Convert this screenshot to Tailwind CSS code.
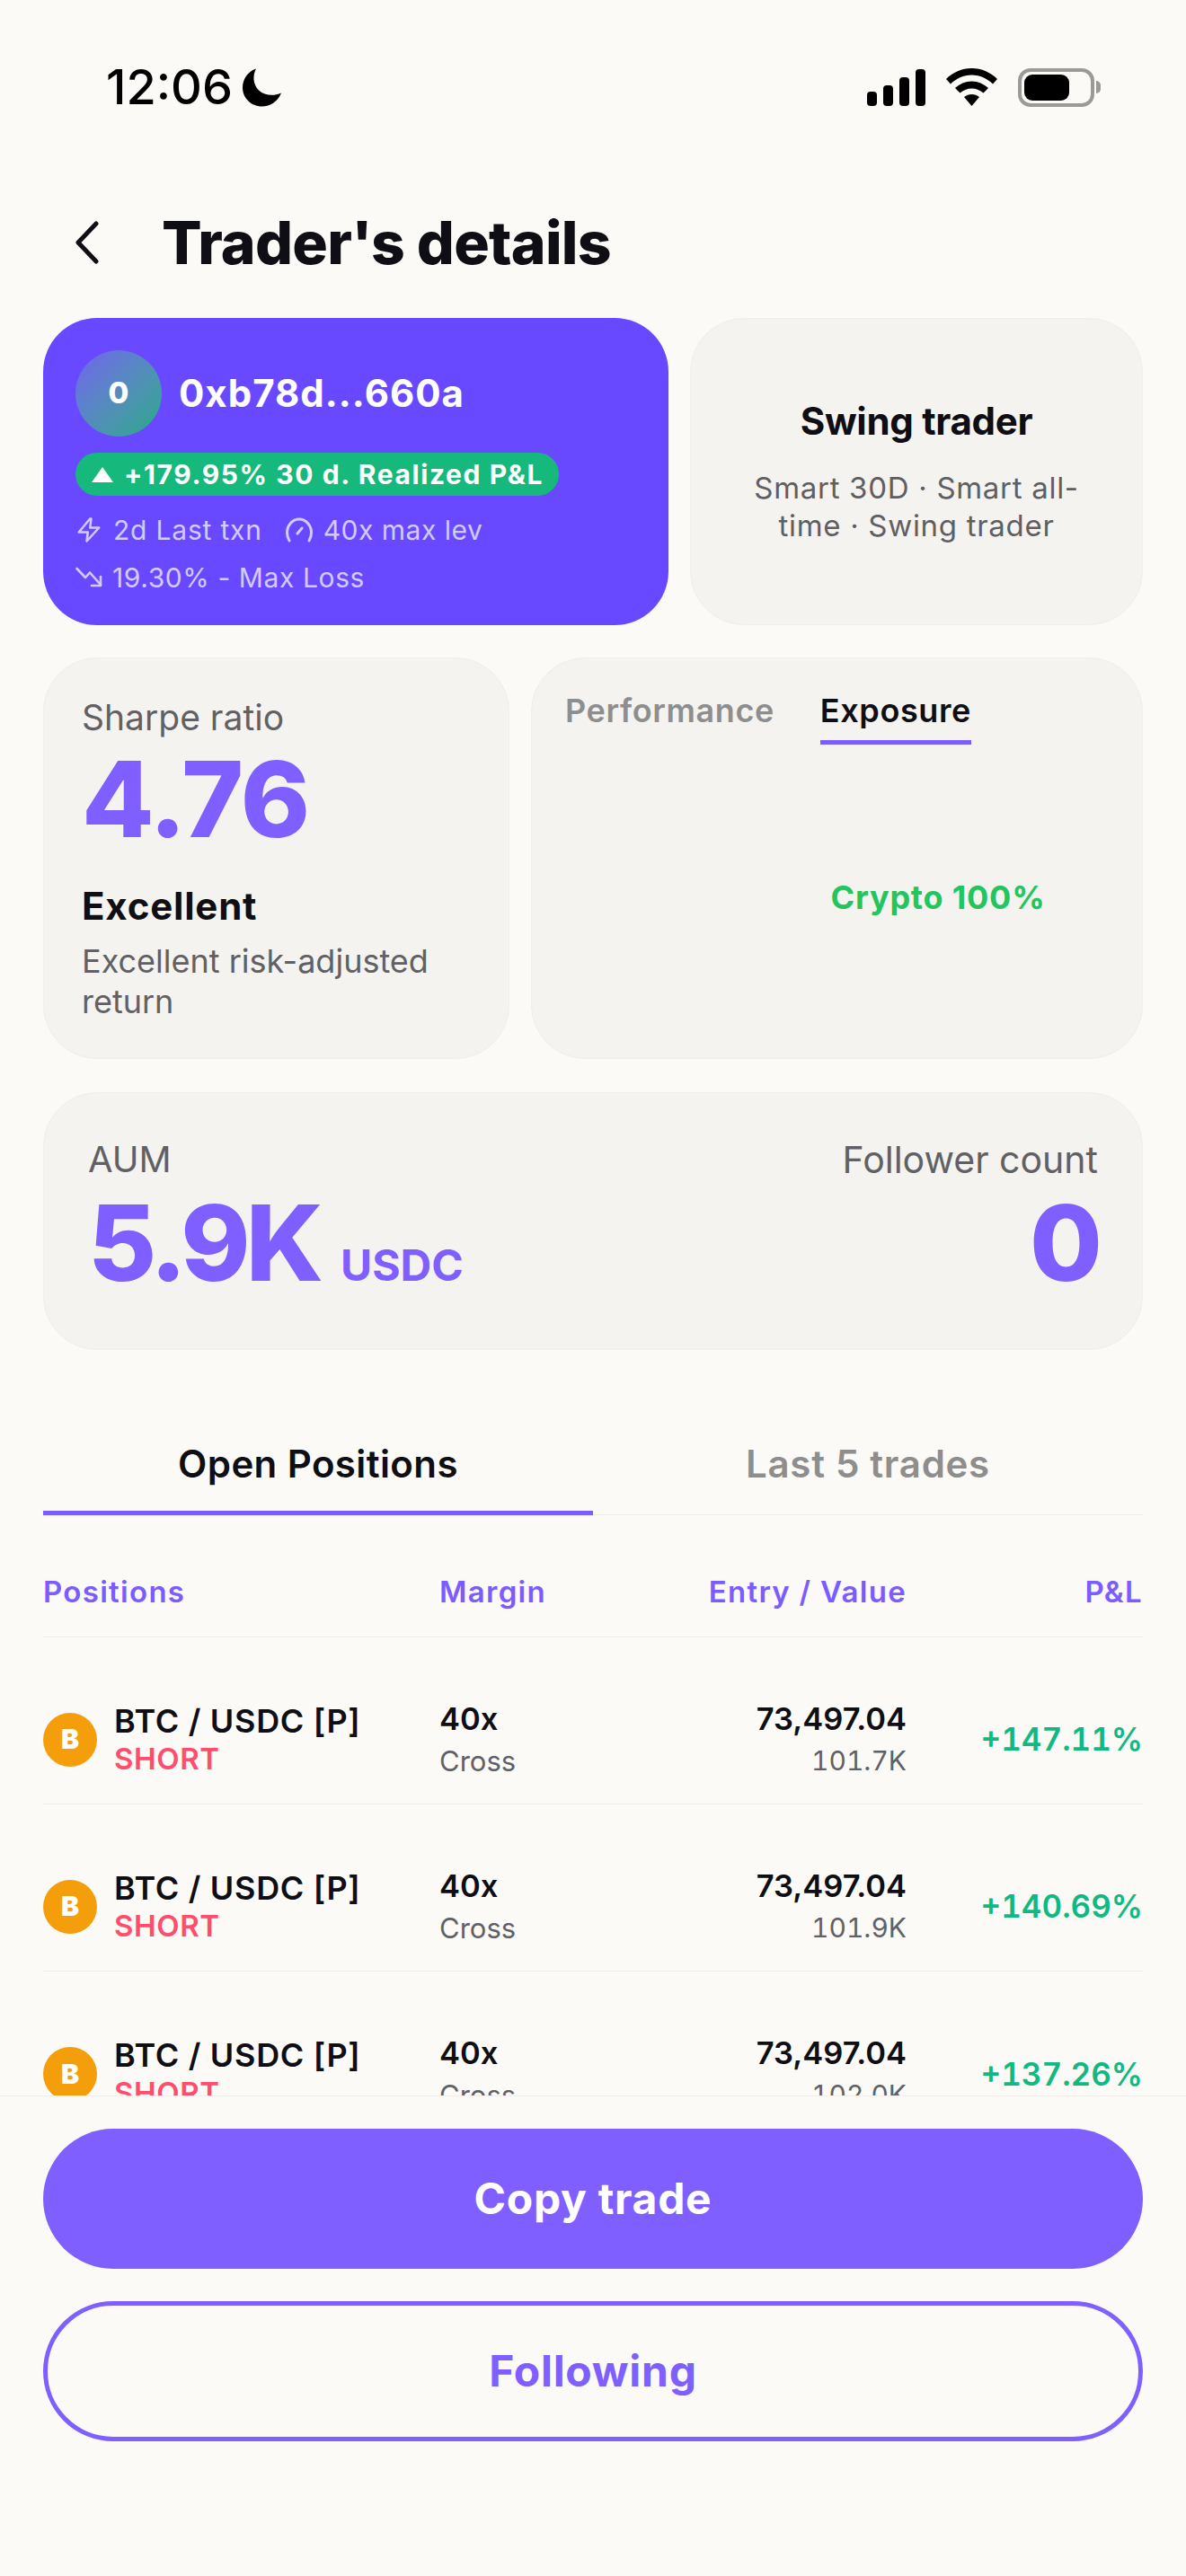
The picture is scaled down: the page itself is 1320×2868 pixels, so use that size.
<!doctype html>
<html><head><meta charset="utf-8"><script src="https://cdn.jsdelivr.net/npm/@tailwindcss/browser@4"></script></head>
<body class="m-0">
<div class="w-[1320px] h-[2868px] flex flex-col overflow-hidden bg-[#FBFAF6] font-[Inter,sans-serif] text-[#0E0E14]">
  <div class="h-[194px] shrink-0 flex items-center justify-between pl-[118px] pr-[95px] text-black">
    <div class="flex items-center gap-[10px]">
      <span class="text-[54px] leading-none font-medium w-[142px]">12:06</span>
      <svg class="w-[43px] h-[43px]" viewBox="0 0 43 43"><path fill="#000" d="M15 0.5C11 8 11.5 18 18 24.500C25 31 35 31 43 27.500C39.500 36.500 31 42.500 21.500 42.500C9.500 42.500 0 33 0 21.500C0 12 6 3.500 15 0.500Z"/></svg>
    </div>
    <div class="flex items-center gap-[23px]">
      <svg class="w-[65px] h-[41px]" viewBox="0 0 65 41" fill="#000"><rect x="0" y="25" width="11" height="16" rx="4"/><rect x="18" y="18" width="11" height="23" rx="4"/><rect x="36" y="9" width="11" height="32" rx="4"/><rect x="54" y="0" width="11" height="41" rx="4"/></svg>
      <svg class="w-[57px] h-[42px]" viewBox="0 0 57 42" fill="#000"><path d="M28.500 0C17.500 0 7.500 4.500 0 12L5 17.500C11 11.500 19.500 7.500 28.500 7.500C37.500 7.500 46 11.500 52 17.500L57 12C49.500 4.500 39.500 0 28.500 0Z"/><path d="M28.500 14.500C21.500 14.500 15 17.500 10 22L15.500 27.500C19 24.500 23.500 22.500 28.500 22.500C33.500 22.500 38 24.500 41.500 27.500L47 22C42 17.500 35.500 14.500 28.500 14.500Z"/><path d="M28.500 29C25.500 29 22.500 30 20 32L28.500 42L37 32C34.500 30 31.500 29 28.500 29Z"/></svg>
      <div class="flex items-center gap-[2px]">
        <div class="w-[85px] h-[43px] rounded-[14px] border-[4px] border-[#9A9A98] p-[3px] box-border">
          <div class="w-[50px] h-full rounded-[9px] bg-black"></div>
        </div>
        <div class="w-[5px] h-[14px] rounded-r-full bg-[#9A9A98]"></div>
      </div>
    </div>
  </div>

  <div class="h-[152px] shrink-0 mb-[8px] flex items-center pl-[84px]">
    <svg class="w-[26px] h-[48px]" viewBox="0 0 26 48" fill="none" stroke="#0E0E14" stroke-width="5" stroke-linecap="round" stroke-linejoin="round"><path d="M23 3L3 24L23 45"/></svg>
    <h1 class="ml-[70px] text-[66px] leading-none font-extrabold tracking-[-0.750px] whitespace-nowrap">Trader's details</h1>
  </div>

  <main class="flex-1 min-h-0 overflow-hidden px-[48px] flex flex-col">
    <div class="h-[342px] shrink-0 flex gap-[24px]">
      <div class="w-[696px] shrink-0 rounded-[60px] bg-[#6949FF] pl-[36px] pt-[36px]">
        <div class="flex items-center gap-[19px]">
          <div class="w-[96px] h-[96px] rounded-full bg-gradient-to-br from-[#7160EE] to-[#1FAA84] flex items-center justify-center text-white text-[33px] font-extrabold">0</div>
          <span class="text-[42px] leading-none font-bold tracking-[1px] text-white">0xb78d...660a</span>
        </div>
        <div class="mt-[18px] w-[538px] h-[48px] rounded-full bg-[#17B87B] flex items-center pl-[18px] text-white">
          <svg class="w-[24px] h-[17px] mr-[12px]" viewBox="0 0 24 17" fill="#fff"><path d="M12 0L24 17H0Z"/></svg>
          <span class="text-[30px] leading-none font-bold tracking-[1.600px] whitespace-nowrap">+179.95% 30 d. Realized P&amp;L</span>
        </div>
        <div class="mt-[20px] flex items-center h-[36px] text-[30px] leading-none text-[#D2CBFF] tracking-[0.8px]">
          <svg class="w-[30px] h-[32px] mr-[12px]" viewBox="0 0 24 24" fill="none" stroke="#D2CBFF" stroke-width="2" stroke-linecap="round" stroke-linejoin="round"><path d="M13 2L3 14h8l-1 8 11-12h-8l1-8z"/></svg>
          <span>2d Last txn</span>
          <svg class="w-[30px] h-[30px] ml-[26px] mr-[12px]" viewBox="0 0 30 30" fill="none" stroke="#D2CBFF" stroke-width="3" stroke-linecap="round"><path d="M4 27C2.500 24.500 1.500 21.500 1.500 18C1.500 10 7.500 3 15 3S28.500 10 28.500 18C28.500 21.500 27.500 24.500 26 27"/><path d="M13 19L18 13"/></svg>
          <span class="tracking-[0.5px]">40x max lev</span>
        </div>
        <div class="mt-[17px] flex items-center h-[36px] text-[30px] leading-none text-[#D2CBFF] tracking-[0.6px]">
          <svg class="w-[30px] h-[24px] mr-[11px]" viewBox="0 0 30 24" fill="none" stroke="#D2CBFF" stroke-width="2.600" stroke-linecap="round" stroke-linejoin="round"><path d="M1.500 2L11 12L16 6.500L28 20"/><path d="M28 11V21H18"/></svg>
          <span>19.30% - Max Loss</span>
        </div>
      </div>
      <div class="flex-1 rounded-[60px] bg-[#F4F3EF] border-[1.500px] border-[#EFEEEA] flex flex-col items-center justify-center text-center px-[48px]">
        <div class="text-[42px] leading-[48px] font-bold tracking-[-0.3px]">Swing trader</div>
        <div class="mt-[29px] text-[33px] leading-[42px] text-[#5E5E63] tracking-[0.7px]">Smart 30D · Smart all-time · Swing trader</div>
      </div>
    </div>

    <div class="mt-[36px] h-[447px] shrink-0 flex gap-[24px]">
      <div class="w-[519px] shrink-0 rounded-[60px] bg-[#F4F3EF] border-[1.500px] border-[#EFEEEA] pl-[42px] pt-[44px]">
        <div class="text-[39px] leading-[44px] text-[#616165]">Sharpe ratio</div>
        <div class="text-[117px] leading-[110px] font-extrabold text-[#7F5FFF] tracking-[-1.500px] mt-[14px]">4.76</div>
        <div class="mt-[39px] text-[42px] leading-[50px] font-bold tracking-[0.8px]">Excellent</div>
        <div class="mt-[14px] text-[36px] leading-[45px] text-[#616165] pr-[30px]">Excellent risk-adjusted return</div>
      </div>
      <div class="flex-1 rounded-[60px] bg-[#F4F3EF] border-[1.500px] border-[#EFEEEA] flex flex-col">
        <div class="flex gap-[51px] pl-[37px] pt-[36px] text-[36px] leading-[44px] font-semibold tracking-[0.6px]">
          <div class="text-[#8E8E8E]">Performance</div>
          <div class="border-b-[5px] border-[#7A5CFF] pb-[11px]">Exposure</div>
        </div>
        <div class="flex-1 flex items-center justify-center pb-[49px] text-[36px] leading-none font-bold tracking-[0.8px] text-[#22C55E]"><span class="ml-[225px] mt-[40px]">Crypto 100%</span></div>
      </div>
    </div>

    <div class="mt-[37px] h-[287px] shrink-0 rounded-[60px] bg-[#F4F3EF] border-[1.500px] border-[#EFEEEA] px-[49px] pt-[50px] flex justify-between">
      <div>
        <div class="text-[40px] leading-[48px] text-[#616165]">AUM</div>
        <div class="flex items-baseline gap-[24px] mt-[13px]">
          <span class="text-[117px] leading-[112px] font-extrabold text-[#7F5FFF] tracking-[-5px]">5.9K</span>
          <span class="text-[48px] leading-none font-bold text-[#7F5FFF]">USDC</span>
        </div>
      </div>
      <div class="text-right">
        <div class="text-[41px] leading-[48px] text-[#616165]">Follower count</div>
        <div class="text-[117px] leading-[112px] font-extrabold text-[#7F5FFF] mt-[13px] mr-[-5px]">0</div>
      </div>
    </div>

    <div class="mt-[96px] h-[88px] shrink-0 flex border-b-[1.500px] border-[#EFEEEA] text-[42px] font-semibold">
      <div class="w-[612px] h-[88px] border-b-[5px] border-[#7A5CFF] flex items-start justify-center pt-[6px] tracking-[0.4px]"><span class="leading-[50px]">Open Positions</span></div>
      <div class="flex-1 flex items-start justify-center pt-[6px] tracking-[0.7px] text-[#8E8E8E]"><span class="leading-[50px]">Last 5 trades</span></div>
    </div>

    <div class="h-[136px] shrink-0 pt-[36px] grid grid-cols-[441px_200px_320px_263px] items-center border-b-[1.500px] border-[#EFEEEA] text-[33px] font-semibold text-[#7A5CFF] tracking-[1.300px]">
      <div>Positions</div><div>Margin</div><div class="text-right">Entry / Value</div><div class="text-right">P&amp;L</div>
    </div>

    <div class="h-[186px] shrink-0 pt-[42px] grid grid-cols-[441px_200px_320px_263px] items-center border-b-[1.500px] border-[#EFEEEA]">
      <div class="flex items-center gap-[19px]">
        <div class="w-[60px] h-[60px] rounded-full bg-[#F59E0B] flex items-center justify-center text-white text-[30px] font-black">B</div>
        <div><div class="text-[36px] leading-[42px] font-semibold tracking-[0.7px]">BTC / USDC [P]</div><div class="text-[33px] leading-[42px] font-semibold text-[#FF4D6D] tracking-[0.6px]">SHORT</div></div>
      </div>
      <div><div class="text-[34.500px] leading-[47px] font-semibold">40x</div><div class="text-[31px] leading-[47px] text-[#616165]">Cross</div></div>
      <div class="text-right"><div class="text-[34.500px] leading-[47px] font-semibold">73,497.04</div><div class="text-[30px] leading-[47px] tabular-nums text-[#616165]">101.7K</div></div>
      <div class="text-right tabular-nums text-[35px] font-semibold text-[#10B981]">+147.11%</div>
    </div>
    <div class="h-[186px] shrink-0 pt-[42px] grid grid-cols-[441px_200px_320px_263px] items-center border-b-[1.500px] border-[#EFEEEA]">
      <div class="flex items-center gap-[19px]">
        <div class="w-[60px] h-[60px] rounded-full bg-[#F59E0B] flex items-center justify-center text-white text-[30px] font-black">B</div>
        <div><div class="text-[36px] leading-[42px] font-semibold tracking-[0.7px]">BTC / USDC [P]</div><div class="text-[33px] leading-[42px] font-semibold text-[#FF4D6D] tracking-[0.6px]">SHORT</div></div>
      </div>
      <div><div class="text-[34.500px] leading-[47px] font-semibold">40x</div><div class="text-[31px] leading-[47px] text-[#616165]">Cross</div></div>
      <div class="text-right"><div class="text-[34.500px] leading-[47px] font-semibold">73,497.04</div><div class="text-[30px] leading-[47px] tabular-nums text-[#616165]">101.9K</div></div>
      <div class="text-right tabular-nums text-[35px] font-semibold text-[#10B981]">+140.69%</div>
    </div>
    <div class="h-[186px] shrink-0 pt-[42px] grid grid-cols-[441px_200px_320px_263px] items-center">
      <div class="flex items-center gap-[19px]">
        <div class="w-[60px] h-[60px] rounded-full bg-[#F59E0B] flex items-center justify-center text-white text-[30px] font-black">B</div>
        <div><div class="text-[36px] leading-[42px] font-semibold tracking-[0.7px]">BTC / USDC [P]</div><div class="text-[33px] leading-[42px] font-semibold text-[#FF4D6D] tracking-[0.6px]">SHORT</div></div>
      </div>
      <div><div class="text-[34.500px] leading-[47px] font-semibold">40x</div><div class="text-[31px] leading-[47px] text-[#616165]">Cross</div></div>
      <div class="text-right"><div class="text-[34.500px] leading-[47px] font-semibold">73,497.04</div><div class="text-[30px] leading-[47px] tabular-nums text-[#616165]">102.0K</div></div>
      <div class="text-right tabular-nums text-[35px] font-semibold text-[#10B981]">+137.26%</div>
    </div>
  </main>

  <footer class="h-[535px] shrink-0 border-t-[1.500px] border-[#EFEEEA] px-[48px] pt-[36px] flex flex-col gap-[36px]">
    <div class="h-[156px] shrink-0 rounded-full bg-[#7F5FFF] flex items-center justify-center text-white text-[48px] font-bold tracking-[0.7px]">Copy trade</div>
    <div class="h-[156px] shrink-0 rounded-full border-[5px] border-[#7F5FFF] flex items-center justify-center text-[#7F5FFF] text-[48px] font-bold tracking-[0.7px]">Following</div>
  </footer>
</div>
</body></html>
